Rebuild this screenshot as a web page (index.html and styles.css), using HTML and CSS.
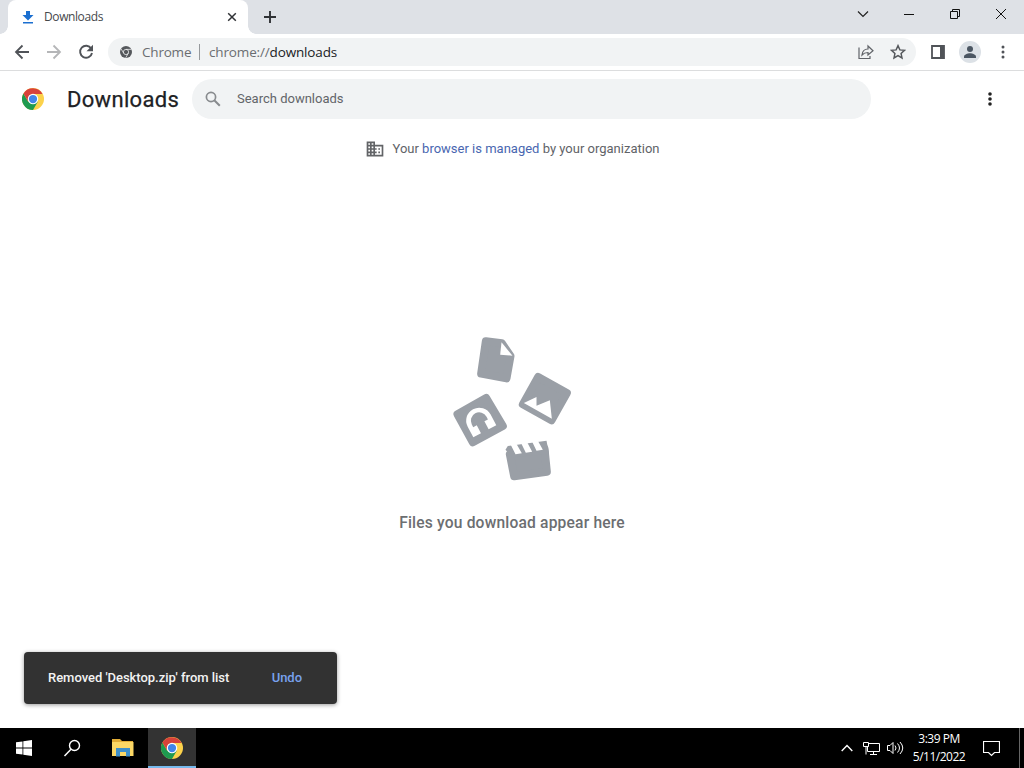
FILE: index.html
```html
<!DOCTYPE html>
<html lang="en">
<head>
<meta charset="utf-8">
<title>Downloads</title>
<link rel="stylesheet" href="styles.css">
</head>
<body>
<svg class="defs" width="0" height="0">
  <symbol id="chrome" viewBox="0 0 48 48">
    <circle cx="24" cy="24" r="24" fill="#fcd24b"/>
    <path d="M24 24 13.600 30 3.200 12A24 24 0 0 0 24 48L34.400 30Z" fill="#1e9a50"/>
    <path d="M24 13H44.800A24 24 0 0 0 3.200 12L13.600 30Z" fill="#d8423a"/>
    <circle cx="24" cy="24" r="11.500" fill="#fff"/>
    <circle cx="24" cy="24" r="9" fill="#4285e8"/>
  </symbol>
</svg>
<header class="tabstrip">
  <div class="tab">
    <svg class="tab-icon" width="12" height="13" viewBox="0 0 12 13"><path d="M4 0h4v4h3.500L6 9.500.5 4H4zM1 11h10v1.500H1z" fill="#1b6fd0"/></svg>
    <span class="tab-title">Downloads</span>
    <svg width="10" height="10" viewBox="0 0 10 10"><path d="m1.200 1.200 7.600 7.600m0-7.600L1.200 8.800" stroke="#303236" stroke-width="1.500"/></svg>
  </div>
  <svg class="new-tab" width="12" height="12" viewBox="0 0 12 12"><path d="M6 0v12M0 6h12" stroke="#303236" stroke-width="1.900"/></svg>
  <div class="window-buttons">
    <svg width="46" height="28" viewBox="0 0 46 28"><path d="m18 11.500 5 5 5-5" fill="none" stroke="#222" stroke-width="1.200"/></svg>
    <svg width="46" height="28" viewBox="0 0 46 28"><path d="M18 14.500h10" stroke="#111"/></svg>
    <svg width="46" height="28" viewBox="0 0 46 28"><path d="M18.500 11.500h7v7h-7zM20.500 11V9.500h7v7H26" fill="none" stroke="#111"/></svg>
    <svg width="46" height="28" viewBox="0 0 46 28"><path d="m18 9 10 10m0-10L18 19" stroke="#111"/></svg>
  </div>
</header>
<nav class="toolbar">
  <svg class="nav-icon" width="16" height="16" viewBox="0 0 16 16"><path d="M15 8H2m6.500-6.500L2 8l6.500 6.500" fill="none" stroke="#505358" stroke-width="1.800"/></svg>
  <svg class="nav-icon" width="16" height="16" viewBox="0 0 16 16"><path d="M1 8h13M7.500 1.500 14 8l-6.500 6.500" fill="none" stroke="#b5b6b8" stroke-width="1.800"/></svg>
  <svg class="nav-icon" width="16" height="16" viewBox="0 0 16 16"><path d="M13.200 4.500A6 6 0 1 0 14 9" fill="none" stroke="#505358" stroke-width="1.900"/><path d="M15 .8v6.500H8.500z" fill="#505358"/></svg>
  <div class="omnibox">
    <svg width="12" height="12" viewBox="0 0 48 48"><circle cx="24" cy="24" r="24" fill="#55585c"/><g fill="none" stroke="#f1f3f4" stroke-width="3"><circle cx="24" cy="24" r="10.500"/><path d="M24 13.500h22M15 29 4 11m29 18L23 47"/></g></svg>
    <span class="site">Chrome</span>
    <span class="divider"></span>
    <span class="url">chrome://<b>downloads</b></span>
    <svg class="share" width="16" height="16" viewBox="0 0 16 16"><path d="M1 3.500v11h11V12M4 11c.4-4 2.500-6 6-6V2l5 4.800-5 4.200V8.500C7.500 8.500 5.500 9.300 4 11z" fill="none" stroke="#606368" stroke-width="1.200"/></svg>
    <svg class="star" width="16" height="16" viewBox="0 0 24 24"><path d="m12 2.500 2.800 6.300 6.900.7-5.100 4.600 1.400 6.800-6-3.500-6 3.500 1.400-6.800-5.100-4.600 6.900-.7z" fill="none" stroke="#55585c" stroke-width="2.200"/></svg>
  </div>
  <svg class="panel" width="14" height="14" viewBox="0 0 14 14"><path d="M1 1h12v12H1z" fill="none" stroke="#505358" stroke-width="1.800"/><path d="M9 1h4v12H9z" fill="#505358"/></svg>
  <svg class="avatar" width="22" height="22" viewBox="0 0 22 22"><circle cx="11" cy="11" r="11" fill="#dce1e6"/><circle cx="11" cy="8" r="3" fill="#4b5662"/><path d="M5 17v-1.500c0-2 3.500-3.300 6-3.300s6 1.300 6 3.300V17z" fill="#4b5662"/></svg>
  <svg class="menu" width="4" height="14" viewBox="0 0 4 14" fill="#505358"><circle cx="2" cy="2" r="1.500"/><circle cx="2" cy="7" r="1.500"/><circle cx="2" cy="12" r="1.500"/></svg>
</nav>
<main class="page">
  <div class="page-header">
    <svg width="22" height="22"><use href="#chrome"/></svg>
    <h1>Downloads</h1>
    <div class="search">
      <svg width="16" height="16" viewBox="0 0 16 16"><circle cx="6" cy="6" r="4.600" fill="none" stroke="#888b8e" stroke-width="1.700"/><path d="m9.300 9.300 5.500 5.500" stroke="#888b8e" stroke-width="2"/></svg>
      <span>Search downloads</span>
    </div>
    <svg class="more" width="4" height="14" viewBox="0 0 4 14" fill="#222"><circle cx="2" cy="2" r="1.800"/><circle cx="2" cy="7" r="1.800"/><circle cx="2" cy="12" r="1.800"/></svg>
  </div>
  <p class="managed">
    <svg width="20" height="20" viewBox="0 0 24 24"><path d="M12 7V3H2v18h20V7zM6 19H4v-2h2zm0-4H4v-2h2zm0-4H4V9h2zm0-4H4V5h2zm4 12H8v-2h2zm0-4H8v-2h2zm0-4H8V9h2zm0-4H8V5h2zm10 12h-8v-2h2v-2h-2v-2h2v-2h-2V9h8zm-2-8h-2v2h2zm0 4h-2v2h2z" fill="#626467"/></svg>
    <span>Your <a>browser is managed</a> by your organization</span>
  </p>
  <section class="empty">
    <svg width="145" height="165" viewBox="-1.500 0 435 495">
      <g fill="#9a9fa6" stroke="#9a9fa6" stroke-width="24" stroke-linejoin="round">
        <path d="m136 49 48 6 26 38-12 67-76-14z"/>
        <path d="m293 156 86 48-46 82-86-48z"/>
        <path d="m51 268 86-49 50 84-90 49z"/>
        <path d="m208 388 104-17 7 69-98 14z"/>
      </g>
      <path d="m195 374 7-11 116-16 8 40-112 10z" fill="#9a9fa6"/>
      <g fill="#fff">
        <path d="m183 52-4 37 37 3z"/>
        <path d="m250 234 38-18v26l40-16 6 55z"/>
        <path d="m211 360 17-3 16 28-19 3zm31-5 18-3 15 28-19 3zm33-5 17-3 15 27-19 3z"/>
        <path transform="translate(116 287) rotate(-28)" d="M-39 36V0a39 39 0 0 1 78 0v36H13V9h12V0a25 25 0 0 0-50 0v9h12v27z"/>
      </g>
    </svg>
    <h2>Files you download appear here</h2>
  </section>
  <div class="toast"><span>Removed 'Desktop.zip' from list</span><b>Undo</b></div>
</main>
<footer class="taskbar">
  <div class="task"><svg width="16" height="16" viewBox="0 0 16 16"><path d="m0 2.300 6.500-.9v6.200H0zm7.300-1L16 0v7.600H7.300zM0 8.400h6.500v6.200L0 13.700zm7.300 0H16V16l-8.700-1.200z" fill="#fff"/></svg></div>
  <div class="task"><svg width="18" height="18" viewBox="0 0 18 18"><circle cx="11.500" cy="6.500" r="5" fill="none" stroke="#fff" stroke-width="1.400"/><path d="M8 10.300 1.500 17" stroke="#fff" stroke-width="1.500"/></svg></div>
  <div class="task files"><svg width="22" height="20" viewBox="0 0 22 20"><path d="M0 1h8l2 2h11v15H0z" fill="#e1ac36"/><path d="M0 4h21.500v14H0z" fill="#fbd765"/><path d="M4 10h14v8.500h-4V14H8v4.500H4z" fill="#3e8fc9"/></svg></div>
  <div class="task active"><svg width="22" height="22"><use href="#chrome"/></svg></div>
  <div class="tray">
    <svg width="12" height="8" viewBox="0 0 12 8"><path d="m.7 7 5.300-5.500L11.300 7" fill="none" stroke="#fff" stroke-width="1.400"/></svg>
    <svg class="network" width="17" height="15" viewBox="0 0 17 15"><path d="M6 2.500h10.500v8H4.500V6M.5 1.500h5v4h-5zM3 5.500v8M10.500 10.500v3M7 13.500h7" fill="none" stroke="#fff"/></svg>
    <svg class="volume" width="17" height="14" viewBox="0 0 17 14"><path d="M.5 4.500H3l3-3v11l-3-3H.5zM8 4.500q2 2.500 0 5M10.500 2.500q4 4.500 0 9M13 1q5.500 6 0 12" fill="none" stroke="#fff"/></svg>
    <div class="clock"><span>3:39 PM</span><span class="date">5/11/2022</span></div>
    <svg class="action" width="17" height="17" viewBox="0 0 17 17"><path d="M.5 1.500h16v11h-5l-3 3-3-3h-5z" fill="none" stroke="#fff" stroke-width="1.200"/></svg>
    <span class="show-desktop"></span>
  </div>
</footer>
</body>
</html>
```
FILE: styles.css
```css
* { box-sizing: border-box; }
body { margin: 0; width: 1024px; height: 768px; overflow: hidden; display: flex; flex-direction: column; background: #fff; font-family: Roboto, "Liberation Sans", sans-serif; }
svg { display: block; flex: none; }
span { white-space: nowrap; }
.defs { position: absolute; }
.tabstrip { height: 34px; flex: none; display: flex; background: #dee1e6; padding-left: 8px; }
.tab { width: 240px; height: 34px; position: relative; display: flex; align-items: center; padding: 0 11px 0 14px; background: #fff; border-radius: 8px 8px 0 0; }
.tab::before, .tab::after { content: ""; position: absolute; bottom: 0; width: 8px; height: 8px; }
.tab::before { left: -8px; background: radial-gradient(circle at 0 0, #dee1e6 7.5px, #fff 8px); }
.tab::after { right: -8px; background: radial-gradient(circle at 100% 0, #dee1e6 7.5px, #fff 8px); }
.tab-title { flex: 1; margin: -2px 0 0 10px; font: 12px "Open Sans", sans-serif; letter-spacing: -.4px; color: #45484c; }
.new-tab { margin: 11px 0 0 16px; }
.window-buttons { display: flex; margin-left: auto; }
.toolbar { height: 37px; flex: none; display: flex; align-items: center; padding-left: 14px; border-bottom: 1px solid #dcddde; }
.nav-icon { margin-right: 16px; }
.omnibox { width: 808px; height: 28px; display: flex; align-items: center; padding: 0 10px 0 12px; margin-left: -2px; background: #f1f3f4; border-radius: 14px; font: 13.5px "Open Sans", sans-serif; color: #6a6d71; }
.site { width: 49px; margin-left: 10px; letter-spacing: -.2px; }
.divider { width: 1px; height: 16px; margin: 0 9px 0 8px; background: #96999c; }
.url { letter-spacing: -.15px; }
.url b { font-weight: 400; color: #202124; }
.share { margin-left: auto; }
.star { margin-left: 16px; }
.panel { margin-left: 15px; }
.avatar { margin-left: 14px; }
.menu { margin-left: 20px; }
.page { height: 657px; flex: none; display: flex; flex-direction: column; }
.page-header { height: 56px; flex: none; display: flex; align-items: center; padding: 0 32px 0 22px; }
h1 { width: 112px; margin: 0 13px 0 23px; font-size: 22px; font-weight: 400; letter-spacing: .32px; color: #202124; -webkit-text-stroke: .25px #202124; }
.search { width: 679px; height: 40px; display: flex; align-items: center; gap: 16px; padding-left: 13px; border-radius: 20px; background: #f1f3f4; font-size: 13px; color: #626569; }
.search span, .managed span, .toast span, .toast b { padding-bottom: 2px; }
.more { margin-left: auto; }
.managed { height: 44px; flex: none; display: flex; justify-content: center; align-items: center; gap: 8px; margin: 0; font-size: 13px; color: #5f6368; }
.managed a { color: #4866b0; }
.empty { display: flex; flex-direction: column; align-items: center; padding-top: 154px; }
h2 { margin: 23px 0 0; font-size: 15.6px; line-height: 20px; font-weight: 500; letter-spacing: .18px; color: #6c6e71; }
.toast { width: 313px; height: 52px; display: flex; align-items: center; justify-content: space-between; margin: auto 0 24px 24px; padding: 0 35px 0 24px; background: #323232; border-radius: 4px; box-shadow: 0 1px 4px #0006; color: #f3f3f3; font-size: 13px; font-weight: 500; letter-spacing: -.03px; }
.toast b { color: #78a1ed; font-weight: 500; }
.taskbar { height: 40px; flex: none; display: flex; background: #000; color: #fff; }
.task { width: 48px; height: 40px; display: flex; align-items: center; justify-content: center; }
.files { width: 52px; padding-left: 2px; }
.active { padding: 2px 1px 0 0; background: #333; border-bottom: 2px solid #76b9ed; }
.tray { display: flex; align-items: center; margin-left: auto; }
.network { margin-left: 10px; }
.volume { margin-left: 7px; }
.clock { width: 62px; margin-left: 4px; display: flex; flex-direction: column; align-items: center; font: 12px/18px "Open Sans", sans-serif; letter-spacing: -.5px; }
.action { margin-left: 13px; }
.show-desktop { width: 5px; height: 40px; margin-left: 19px; border-left: 1px solid #666; }
```
